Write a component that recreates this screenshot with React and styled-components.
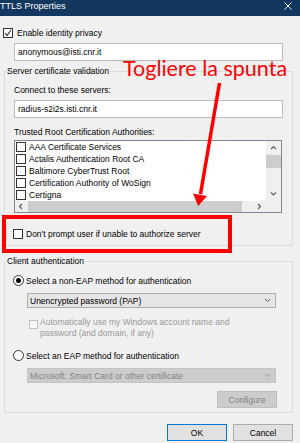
import React from "react";
import styled, { createGlobalStyle } from "styled-components";

const GlobalStyle = createGlobalStyle`
  html, body {
    margin: 0;
    padding: 0;
  }
  body {
    font-family: "Liberation Sans", Arial, sans-serif;
    font-size: 8.5px;
    color: #000;
    background: #f0f0f0;
  }
  * {
    box-sizing: border-box;
  }
`;

const Window = styled.div`
  position: relative;
  width: 300px;
  height: 443px;
  overflow: hidden;
  background: #f0f0f0;
  display: flex;
  flex-direction: column;
`;

const TitleBar = styled.div`
  flex: none;
  height: 16px;
  background: #12385f;
  color: #fff;
  font-size: 9px;
  line-height: 11px;
  padding: 1px 8px 0 0;
  display: flex;
  justify-content: space-between;
  align-items: flex-start;
`;

const CloseIcon = styled.svg`
  margin-top: 1px;
`;

const Row = styled.div`
  display: flex;
  align-items: ${(p) => (p.$alignTop ? "flex-start" : "center")};
  gap: ${(p) => p.$gap || 4}px;
  margin-top: ${(p) => p.$top || 0}px;
  margin-left: ${(p) => p.$left || 0}px;
  line-height: 10px;
  white-space: nowrap;
  color: ${(p) => (p.$disabled ? "#9a9a9a" : "#000")};
`;

const Check = styled.span`
  flex: none;
  width: ${(p) => p.$size || 10}px;
  height: ${(p) => p.$size || 10}px;
  border: 1px solid ${(p) => (p.$disabled ? "#c2c2c2" : "#333")};
  background: ${(p) => (p.$disabled ? "#f7f7f7" : "#fff")};
  display: inline-flex;
  align-items: center;
  justify-content: center;
  margin-top: ${(p) => p.$top || 0}px;
`;

const Radio = styled.span`
  flex: none;
  width: 11px;
  height: 11px;
  border-radius: 50%;
  border: 1px solid #333;
  background: #fff;
  display: inline-flex;
  align-items: center;
  justify-content: center;
  &::after {
    content: "";
    width: 5px;
    height: 5px;
    border-radius: 50%;
    background: ${(p) => (p.$checked ? "#000" : "transparent")};
  }
`;

const TextInput = styled.div`
  height: 18px;
  width: ${(p) => p.$width || 269}px;
  margin-top: ${(p) => p.$top || 0}px;
  margin-left: ${(p) => p.$left || 0}px;
  border: 1px solid #bdbdbd;
  background: #fff;
  padding-left: 3px;
  display: flex;
  align-items: center;
`;

const GroupBox = styled.fieldset`
  margin: ${(p) => p.$top}px 7px 0 4px;
  padding: 0 9px ${(p) => p.$bottom}px 9px;
  border: 1px solid #dcdcdc;
  min-inline-size: 0;
`;

const GroupTitle = styled.legend`
  margin-left: -8px;
  padding: 0 1px;
  line-height: 10px;
`;

const Label = styled.div`
  margin-top: ${(p) => p.$top || 0}px;
  line-height: 10px;
  white-space: nowrap;
`;

const ListBox = styled.div`
  margin-top: 3px;
  height: 73px;
  width: 268px;
  border: 1px solid #828790;
  background: #fff;
  display: grid;
  grid-template-columns: 1fr 15px;
  grid-template-rows: 1fr 11px;
`;

const ListItems = styled.div`
  overflow: hidden;
  padding-left: 1px;
`;

const ListItem = styled.div`
  height: 12px;
  display: flex;
  align-items: center;
  gap: 3px;
  white-space: nowrap;
`;

const VScroll = styled.div`
  background: #f0f0f0;
  display: flex;
  flex-direction: column;
  align-items: stretch;
`;

const HScroll = styled.div`
  background: #f0f0f0;
  display: flex;
`;

const ScrollButton = styled.div`
  flex: none;
  width: ${(p) => p.$w || 15}px;
  height: ${(p) => p.$h || 11}px;
  display: flex;
  align-items: center;
  justify-content: center;
`;

const Thumb = styled.div`
  flex: none;
  background: #cdcdcd;
  width: ${(p) => p.$w || "auto"};
  height: ${(p) => p.$h || "auto"};
`;

const Spacer = styled.div`
  flex: 1;
`;

const Corner = styled.div`
  background: #f0f0f0;
`;

const Select = styled.div`
  margin: 7px 0 0 13px;
  width: 249px;
  height: 15px;
  border: 1px solid ${(p) => (p.$disabled ? "#c4c4c4" : "#adadad")};
  background: ${(p) => (p.$disabled ? "#cccccc" : "#e5e5e5")};
  color: ${(p) => (p.$disabled ? "#838383" : "#000")};
  display: flex;
  align-items: center;
  justify-content: space-between;
  padding: 0 4px 0 2px;
  white-space: nowrap;
`;

const WrapText = styled.div`
  line-height: 11px;
`;

const Button = styled.div`
  width: 60px;
  height: 17px;
  border: 1px solid ${(p) => (p.$primary ? "#0078d7" : p.$disabled ? "#bfbfbf" : "#adadad")};
  background: ${(p) => (p.$disabled ? "#cccccc" : "#e1e1e1")};
  color: ${(p) => (p.$disabled ? "#838383" : "#000")};
  display: flex;
  align-items: center;
  justify-content: center;
`;

const ConfigureButton = styled(Button)`
  margin: 8px 6px 0 auto;
`;

const Footer = styled.div`
  display: flex;
  justify-content: flex-end;
  gap: 6px;
  margin-top: 11px;
  padding-right: 7px;
`;

const RedBox = styled.div`
  position: absolute;
  left: 2px;
  top: 215px;
  width: 230px;
  height: 38px;
  border: 4px solid #ff0000;
  pointer-events: none;
`;

const RedNote = styled.div`
  position: absolute;
  left: 123px;
  top: 55px;
  font-family: Lato, "Open Sans", sans-serif;
  font-size: 21.5px;
  line-height: 27px;
  color: #ff0000;
  white-space: nowrap;
`;

const Arrow = styled.svg`
  position: absolute;
  left: 185px;
  top: 78px;
  pointer-events: none;
`;

const Chevron = ({ dir }) => {
  const pts = {
    up: "1,4 3.5,1.5 6,4",
    down: "1,1.5 3.5,4 6,1.5",
    left: "4,1 1.5,3.5 4,6",
    right: "2,1 4.5,3.5 2,6",
  }[dir];
  return (
    <svg width="7" height="7" viewBox="0 0 7 7">
      <polyline points={pts} fill="none" stroke="#606060" strokeWidth="1.2" />
    </svg>
  );
};

const SelectChevron = ({ color }) => (
  <svg width="7" height="5" viewBox="0 0 7 5">
    <polyline points="1,1 3.5,3.5 6,1" fill="none" stroke={color} strokeWidth="1" />
  </svg>
);

const CheckMark = () => (
  <svg width="8" height="8" viewBox="0 0 8 8">
    <polyline points="1,4 3,6.5 7,1" fill="none" stroke="#333" strokeWidth="1.1" />
  </svg>
);

// the last row sits under the horizontal scrollbar: only its box top shows
const authorities = [
  "AAA Certificate Services",
  "Actalis Authentication Root CA",
  "Baltimore CyberTrust Root",
  "Certification Authority of WoSign",
  "Certigna",
  "",
];

const App = () => {
  return (
    <>
      <GlobalStyle />
      <Window>
        <TitleBar>
          <span>TTLS Properties</span>
          <CloseIcon width="8" height="8" viewBox="0 0 8 8">
            <path d="M0.5 0.5 L7.5 7.5 M7.5 0.5 L0.5 7.5" stroke="#fff" strokeWidth="0.9" />
          </CloseIcon>
        </TitleBar>

        <Row $top={12} $left={3}>
          <Check>
            <CheckMark />
          </Check>
          <span>Enable identity privacy</span>
        </Row>
        <TextInput $top={5} $left={14}>anonymous@isti.cnr.it</TextInput>

        <GroupBox $top={5} $bottom={6}>
          <GroupTitle>Server certificate validation</GroupTitle>
          <Label $top={9}>Connect to these servers:</Label>
          <TextInput $top={5} $width={269}>radius-s2i2s.isti.cnr.it</TextInput>
          <Label $top={9}>Trusted Root Certification Authorities:</Label>
          <ListBox>
            <ListItems>
              {authorities.map((name, i) => (
                <ListItem key={i}>
                  <Check />
                  {name && <span>{name}</span>}
                </ListItem>
              ))}
            </ListItems>
            <VScroll>
              <ScrollButton $h={14}>
                <Chevron dir="up" />
              </ScrollButton>
              <Thumb $h="13px" />
              <Spacer />
              <ScrollButton $h={14}>
                <Chevron dir="down" />
              </ScrollButton>
            </VScroll>
            <HScroll>
              <ScrollButton $w={13}>
                <Chevron dir="left" />
              </ScrollButton>
              <Thumb $w="214px" />
              <Spacer />
              <ScrollButton $w={13}>
                <Chevron dir="right" />
              </ScrollButton>
            </HScroll>
            <Corner />
          </ListBox>
          <Row $top={16} $left={-1} $gap={3}>
            <Check />
            <span>Don't prompt user if unable to authorize server</span>
          </Row>
        </GroupBox>

        <GroupBox $top={10} $bottom={4}>
          <GroupTitle>Client authentication</GroupTitle>
          <Row $top={9} $left={-1} $gap={2}>
            <Radio $checked />
            <span>Select a non-EAP method for authentication</span>
          </Row>
          <Select>
            <span>Unencrypted password (PAP)</span>
            <SelectChevron color="#555" />
          </Select>
          <Row $top={9} $left={15} $gap={2} $disabled $alignTop>
            <Check $size={9} $disabled $top={3} />
            <WrapText>
              Automatically use my Windows account name and
              <br />
              password (and domain, if any)
            </WrapText>
          </Row>
          <Row $top={11} $left={-1} $gap={2}>
            <Radio />
            <span>Select an EAP method for authentication</span>
          </Row>
          <Select $disabled>
            <span>Microsoft: Smart Card or other certificate</span>
            <SelectChevron color="#999" />
          </Select>
          <ConfigureButton $disabled>Configure</ConfigureButton>
        </GroupBox>

        <Footer>
          <Button $primary>OK</Button>
          <Button>Cancel</Button>
        </Footer>

        <RedNote>Togliere la spunta</RedNote>
        <Arrow width="40" height="132" viewBox="0 0 40 132">
          <line x1="34.5" y1="5" x2="15.5" y2="116" stroke="#ff0000" strokeWidth="3.5" />
          <polygon points="8,115.5 22,118 13.2,128" fill="#ff0000" />
        </Arrow>
        <RedBox />
      </Window>
    </>
  );
};

export default App;
